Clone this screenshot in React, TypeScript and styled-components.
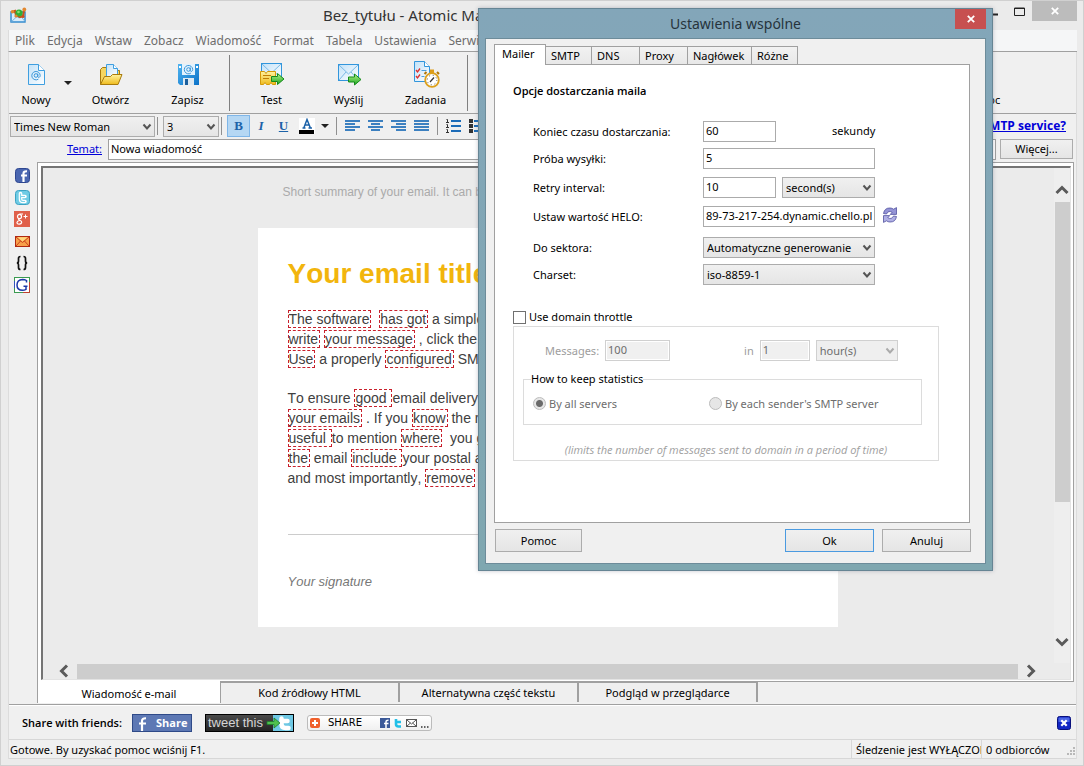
import React from "react";
import styled, { createGlobalStyle, css } from "styled-components";

const UI = `"Noto Sans", "Open Sans", sans-serif`;
const UI_BOLD = `"Open Sans", "Noto Sans", sans-serif`;
const LINE = "#a0a0a0";

const GlobalStyle = createGlobalStyle`
  * { box-sizing: border-box; }
  html, body { margin: 0; padding: 0; }
  body { font: 11px/16px ${UI}; color: #000; background: #ebebeb; }
  button, input, select { font: inherit; color: inherit; margin: 0; border-radius: 0; }
  button { background: none; border: 0; padding: 0; }
  svg { display: block; flex: none; }
`;

/* ---------- main window ---------- */

const Window = styled.div`
  position: relative;
  display: flex;
  flex-direction: column;
  height: 100vh;
  min-height: 700px;
  padding: 0 6px 6px 7px;
  overflow: hidden;
  background: #ebebeb;
  border: 1px solid #d0d0d0;
`;

const TitleBar = styled.header`
  display: flex;
  align-items: flex-start;
  height: 29px;
  padding: 0 0 0 2px;
`;

const AppIcon = styled.span`
  padding-top: 6px;
`;

const WindowTitle = styled.h1`
  flex: 1;
  margin: 0;
  padding: 4px 0 0 296px;
  font: 400 15px/20px ${UI};
  color: #333;
  white-space: nowrap;
`;

const WindowControls = styled.div`
  display: flex;
`;

const WindowButton = styled.button<{ $close?: boolean }>`
  display: grid;
  place-items: center;
  width: ${(p) => (p.$close ? 45 : 26)}px;
  height: 20px;
  background: ${(p) => (p.$close ? "#bcbcbc" : "transparent")};
`;

const MenuBar = styled.nav`
  display: flex;
  gap: 12px;
  height: 22px;
  padding: 1px 6px 0;
  background: #f5f6f7;
  border-left: 1px solid #dcdcdc;
  border-bottom: 1px solid ${LINE};
  overflow: hidden;
`;

const MenuItem = styled.button`
  font-size: 12px;
  line-height: 20px;
  color: #6d6d6d;
`;

const Client = styled.div`
  display: flex;
  flex: 1;
  flex-direction: column;
  min-height: 0;
  background: #f0f0f0;
  border-left: 1px solid #dcdcdc;
  border-right: 1px solid #dcdcdc;
`;

const Toolbar = styled.div`
  display: flex;
  height: 62px;
  padding-right: 55px;
  border-bottom: 1px solid ${LINE};
`;

const Tool = styled.button<{ $narrow?: boolean }>`
  display: flex;
  flex-direction: column;
  align-items: center;
  gap: 3px;
  width: ${(p) => (p.$narrow ? 54 : 77)}px;
  padding-top: 9px;
`;

const ToolArrow = styled.button`
  display: grid;
  place-items: center;
  width: 9px;
`;

const ToolRule = styled.span`
  width: 1px;
  height: 56px;
  margin: 3px;
  background: #808080;
`;

const Spacer = styled.span`
  flex: 1;
`;

const FormatBar = styled.div`
  display: flex;
  align-items: center;
  height: 24px;
  padding: 0 10px 0 1px;
`;

const Rule = styled.span<{ $gap?: number }>`
  width: 1px;
  height: 18px;
  margin: 0 ${(p) => p.$gap ?? 5}px 0 ${(p) => (p.$gap ? p.$gap : 2)}px;
  background: #909090;
`;

const FormatButton = styled.button<{ $on?: boolean; $width?: number }>`
  display: grid;
  place-items: center;
  width: ${(p) => p.$width ?? 23}px;
  height: 22px;
  font: 700 13px/16px "Liberation Serif", serif;
  color: #1c62a8;
  ${(p) =>
    p.$on &&
    css`
      background: #b5d7f3;
      border: 1px solid #7fb6e8;
    `}
`;

const ServiceLink = styled.a`
  font: 700 12px/16px ${UI_BOLD};
  color: #0000d8;
`;

const SubjectRow = styled.div`
  display: flex;
  align-items: center;
  height: 22px;
  padding-right: 3px;
  gap: 4px;
`;

const SubjectLabel = styled.label`
  width: 93px;
  text-align: right;
  color: #0000d8;
  text-decoration: underline;
  margin-right: 2px;
`;

const SubjectInput = styled.input`
  flex: 1;
  min-width: 0;
  height: 21px;
  padding: 0 2px 2px;
  background: #fff;
  border: 1px solid ${LINE};
`;

const Button = styled.button<{ $width: number; $primary?: boolean; $low?: boolean }>`
  width: ${(p) => p.$width}px;
  height: ${(p) => (p.$low ? 20 : 23)}px;
  background: linear-gradient(#f0f0f0, #e5e5e5);
  border: 1px solid ${(p) => (p.$primary ? "#4a9ae0" : "#acacac")};
`;

/* ---------- editor ---------- */

const Workspace = styled.div`
  display: flex;
  flex: 1;
  min-height: 0;
  padding: 2px 2px 0 0;
`;

const SideBar = styled.aside`
  display: flex;
  flex-direction: column;
  align-items: center;
  gap: 6px;
  width: 28px;
  padding: 5px 2px 0 0;
`;

const SideButton = styled.button`
  display: grid;
  place-items: center;
  width: 16px;
  height: 16px;
`;

const Frame = styled.div`
  display: flex;
  flex: 1;
  min-width: 0;
  padding: 3px 2px 1px 3px;
  background: #fff;
  border: 1px solid ${LINE};
`;

const Editor = styled.div`
  display: grid;
  flex: 1;
  grid-template: minmax(0, 1fr) 16px / minmax(0, 1fr) 16px;
  min-width: 0;
  border: 1px solid #e3e3e3;
  border-top: 2px solid #747474;
  border-left: 2px solid #747474;
  background: #ebebeb;
`;

const Canvas = styled.main`
  display: flex;
  flex-direction: column;
  align-items: center;
  overflow: hidden;
  padding: 14px 2px 0 0;
  font-family: "Liberation Sans", Arial, sans-serif;
  font-kerning: none;
`;

const Summary = styled.p`
  width: 530px;
  margin: 0 0 28px;
  font-size: 12px;
  line-height: 20px;
  height: 18px;
  color: #aaa;
  white-space: nowrap;
`;

const Sheet = styled.article`
  width: 580px;
  height: 399px;
  padding: 30px 30px 0;
  background: #fff;
`;

const MailTitle = styled.h2`
  margin: 0 0 20px;
  font-size: 28px;
  line-height: 31px;
  color: #f2b50d;
`;

const Paragraph = styled.p`
  margin: 0 0 19px;
  font-size: 14px;
  line-height: 20px;
  color: #404040;
  white-space: pre;
`;

const Misspelt = styled.span`
  padding-right: 1px;
  border: 1px dashed #c8202c;
`;

const SignatureRule = styled.hr`
  margin: 46px 0 38px;
  border: 0;
  border-top: 1px solid #ccc;
`;

const Signature = styled.p`
  margin: 0;
  font-size: 13px;
  line-height: 18px;
  font-style: italic;
  color: #777;
`;

const VScroll = styled.div`
  display: flex;
  flex-direction: column;
  align-items: center;
  gap: 7px;
  padding: 17px 0 16px;
  background: #eeeeee;
`;

const HScroll = styled.div`
  display: flex;
  grid-column: 1 / 3;
  align-items: center;
  gap: 8px;
  padding: 0 34px 0 16px;
`;

const VTrack = styled.span`
  display: flex;
  flex: 1;
  flex-direction: column;
`;

const VThumb = styled.span`
  width: 15px;
  height: 70%;
  background: #cdcdcd;
`;

const HThumb = styled.span`
  flex: 1;
  height: 15px;
  background: #cdcdcd;
`;

const ViewTabs = styled.div`
  display: flex;
  align-items: flex-end;
  height: 23px;
  padding: 0 0 1px 28px;
  border-bottom: 1px solid ${LINE};
`;

const ViewTab = styled.button<{ $active?: boolean }>`
  width: 179px;
  height: 20px;
  margin-bottom: 1px;
  background: #efefef;
  border-top: 1px solid ${LINE};
  border-right: 2px solid ${LINE};
  ${(p) =>
    p.$active &&
    css`
      width: 184px;
      height: 22px;
      margin-bottom: 0;
      padding-top: 3px;
      background: #fff;
      border: 1px solid ${LINE};
      border-top: 0;
      border-bottom: 0;
    `}
`;

const ShareBar = styled.div`
  display: flex;
  align-items: center;
  gap: 13px;
  height: 34px;
  padding: 1px 5px 0 13px;
  border-top: 1px solid #fff;
`;

const ShareLabel = styled.strong`
  width: 97px;
  font: 600 11px/16px ${UI_BOLD};
  white-space: nowrap;
`;

const FacebookButton = styled.button`
  display: flex;
  align-items: center;
  width: 60px;
  height: 18px;
  background: #5d78b4;
  border: 1px solid #2f4a88;
  color: #fff;
  font: 700 11px/16px ${UI_BOLD};
  gap: 8px;
  padding-left: 3px;
`;

const TweetButton = styled.button`
  display: flex;
  align-items: center;
  justify-content: space-between;
  width: 89px;
  height: 18px;
  padding-left: 2px;
  background: linear-gradient(#4a4a4a, #222);
  border: 1px solid #000;
  color: #d4d4d4;
  font: 400 13px/16px "Liberation Sans", sans-serif;
  white-space: nowrap;
`;

const AddThisButton = styled.button`
  display: flex;
  align-items: center;
  gap: 4px;
  width: 125px;
  height: 16px;
  padding: 0 2px;
  background: linear-gradient(#fff, #f0f0f0);
  border: 1px solid #bbb;
  border-radius: 3px;
  font: 400 10px/14px "DejaVu Sans", sans-serif;
`;

const AddThisText = styled.span`
  flex: 1;
  padding-left: 4px;
  text-align: left;
`;

const StatusBar = styled.footer`
  display: flex;
  height: 20px;
  border-top: 1px solid #d7d7d7;
  border-bottom: 1px solid #d7d7d7;
  line-height: 20px;
`;

const StatusPane = styled.span<{ $width?: number }>`
  ${(p) => (p.$width ? `width: ${p.$width}px; border-left: 1px solid #d7d7d7;` : "flex: 1;")}
  padding-left: ${(p) => (p.$width ? 4 : 1)}px;
  overflow: hidden;
  white-space: nowrap;
`;

/* ---------- form controls ---------- */

const SelectBox = styled.span<{ $width: number }>`
  position: relative;
  display: block;
  width: ${(p) => p.$width}px;
  height: 21px;
`;

const SelectControl = styled.select`
  appearance: none;
  display: block;
  width: 100%;
  height: 100%;
  padding: 0 18px 0 3px;
  line-height: 19px;
  background: linear-gradient(#f0f0f0, #e5e5e5);
  border: 1px solid #acacac;
  &:disabled { color: #6d6d6d; background: #efefef; border-color: #d0d0d0; opacity: 1; }
`;

const SelectArrow = styled.span<{ $dim?: boolean }>`
  position: absolute;
  top: 7px;
  right: 3px;
  color: ${(p) => (p.$dim ? "#ababab" : "#555")};
  pointer-events: none;
`;

function Select(props: { width: number; value: string; label: string; id?: string; disabled?: boolean }) {
  return (
    <SelectBox $width={props.width}>
      <SelectControl id={props.id} aria-label={props.label} disabled={props.disabled}>
        <option>{props.value}</option>
      </SelectControl>
      <SelectArrow $dim={props.disabled}>
        <svg width="10" height="8" viewBox="0 0 10 8">
          <path d="M1.5 1.5 5 5.5 8.5 1.5" fill="none" stroke="currentColor" strokeWidth="2" />
        </svg>
      </SelectArrow>
    </SelectBox>
  );
}

const TextInput = styled.input<{ $width: number }>`
  width: ${(p) => p.$width}px;
  height: 21px;
  padding: 0 2px 2px;
  background: #fff;
  border: 1px solid #ababab;
  &:disabled { color: #6d6d6d; background: #f0f0f0; border-color: #d0d0d0; box-shadow: inset 0 0 0 1px #fff; }
`;

/* ---------- settings dialog ---------- */

const Dialog = styled.section`
  position: absolute;
  top: 7px;
  left: 477px;
  display: flex;
  flex-direction: column;
  width: 515px;
  height: 563px;
  padding: 0 6px 6px;
  background: linear-gradient(#83a6b9, #7fa7b0);
  border: 1px solid #668594;
  box-shadow: 0 0 4px rgba(90, 90, 110, 0.35);
`;

const DialogHeader = styled.header`
  display: flex;
  height: 29px;
`;

const DialogTitle = styled.h2`
  flex: 1;
  margin: 0;
  padding: 5px 0 0 31px;
  text-align: center;
  font: 400 14px/20px ${UI};
  color: #26343c;
`;

const CloseButton = styled.button`
  display: grid;
  place-items: center;
  width: 31px;
  height: 20px;
  background: #c75050;
`;

const DialogBody = styled.div`
  display: flex;
  flex: 1;
  flex-direction: column;
  padding: 5px 14px 11px 8px;
  background: #f0f0f0;
  border: 1px solid #6d8c9a;
`;

const TabList = styled.div`
  display: flex;
  align-items: flex-end;
  height: 20px;
`;

const Tab = styled.button<{ $width: number; $active?: boolean }>`
  width: ${(p) => p.$width}px;
  height: 18px;
  padding-left: 5px;
  text-align: left;
  background: linear-gradient(#f2f2f2, #e8e8e8);
  border: 1px solid ${LINE};
  border-left: 0;
  border-bottom: 0;
  ${(p) =>
    p.$active &&
    css`
      z-index: 1;
      height: 21px;
      margin-bottom: -1px;
      padding: 0 0 2px 7px;
      background: #fff;
      border-left: 1px solid ${LINE};
    `}
`;

const Panel = styled.div`
  flex: 1;
  width: 476px;
  padding: 18px 30px 0 18px;
  background: #fff;
  border: 1px solid ${LINE};
`;

const SectionTitle = styled.h3`
  margin: 0 0 22px;
  font: 600 11px/16px ${UI_BOLD};
`;

const Fields = styled.div`
  display: grid;
  grid-template-columns: 170px 1fr;
  grid-template-rows: 27px 29px 29px 31px 27px 29px;
  padding-left: 20px;
`;

const FieldLabel = styled.label`
  line-height: 21px;
`;

const FieldRow = styled.div`
  display: flex;
  align-items: flex-start;
  gap: 6px;
`;

const Unit = styled.span`
  padding-left: 50px;
  line-height: 19px;
`;

const RefreshButton = styled.button`
  padding: 1px;
`;

const CheckLabel = styled.label`
  display: flex;
  align-items: center;
  gap: 3px;
  height: 16px;
  margin-top: 16px;
`;

const CheckBox = styled.input`
  appearance: none;
  width: 13px;
  height: 13px;
  background: #fff;
  border: 1px solid #707070;
`;

const Throttle = styled.div`
  width: 426px;
  height: 135px;
  margin-top: 1px;
  padding: 13px 16px 0 9px;
  border: 1px solid #dcdcdc;
`;

const LimitRow = styled.div`
  display: flex;
  align-items: center;
  gap: 6px;
  padding-left: 22px;
  color: #9d9d9d;
`;

const PeriodLabel = styled.label`
  padding-left: 68px;
`;

const Statistics = styled.fieldset`
  display: flex;
  align-items: center;
  height: 54px;
  margin: 10px 0 0;
  padding: 0 9px 4px;
  border: 1px solid #dcdcdc;
  color: #6d6d6d;
`;

const Legend = styled.legend`
  margin-left: -2px;
  padding: 0;
  color: #000;
`;

const RadioLabel = styled.label<{ $width?: number }>`
  display: flex;
  align-items: center;
  gap: 3px;
  width: ${(p) => (p.$width ? `${p.$width}px` : "auto")};
`;

const Radio = styled.input`
  appearance: none;
  width: 13px;
  height: 13px;
  background: #e6e6e6;
  border: 1px solid #bcbcbc;
  border-radius: 50%;
  &:checked { background: radial-gradient(circle, #6a6a6a 3px, #e6e6e6 4px); }
`;

const Note = styled.p`
  margin: 17px 0 0 7px;
  text-align: center;
  font: italic 400 11px/16px "Open Sans", "Noto Sans", sans-serif;
  color: #a0a0a0;
  white-space: nowrap;
`;

const DialogActions = styled.div`
  display: flex;
  gap: 8px;
  padding-top: 6px;
  width: 477px;
  padding-left: 1px;
`;

/* ---------- drawings ---------- */

const Caret = () => (
  <svg width="8" height="4" viewBox="0 0 8 4">
    <path d="M0 0h8L4 4z" fill="#222" />
  </svg>
);

const Chevron = ({ d, w, h }: { d: string; w: number; h: number }) => (
  <svg width={w} height={h} viewBox={`0 0 ${w} ${h}`}>
    <path d={d} fill="none" stroke="#5a5a5a" strokeWidth="3" />
  </svg>
);

const AppLogo = () => (
  <svg width="17" height="17" viewBox="0 0 17 17">
    <rect x="1" y="5" width="14" height="10" fill="#d9ecfa" stroke="#2a86cc" strokeWidth="1.4" />
    <path d="M1.5 14.5 7 9.500l2 1.500 2-1.500 4 5" fill="none" stroke="#7db8e4" />
    <path d="M2 5 5 4l1 4 4 2 3-1 1-6" fill="none" stroke="#c8511b" strokeWidth="2.200" />
    <circle cx="9" cy="6" r="3.600" fill="#2fae35" />
    <circle cx="8.500" cy="5" r="1.300" fill="#86e070" />
    <circle cx="2.500" cy="4.800" r="1.800" fill="#e2872e" />
    <circle cx="14.300" cy="2.500" r="1.900" fill="#e2872e" />
    <circle cx="6" cy="9" r="1.600" fill="#e2872e" />
    <circle cx="13" cy="9.500" r="1.600" fill="#c8511b" />
  </svg>
);

const At = ({ x, y }: { x: number; y: number }) => (
  <g transform={`translate(${x} ${y})`} fill="none" stroke="#3b97da">
    <circle r="1.800" />
    <path d="M1.800-2v3.200c.3 1.200 2.400.9 2.400-1.200A4.200 4.200 0 1 0 2.400 3.600" />
  </g>
);

const Defs = () => (
  <svg width="0" height="0" style={{ position: "absolute" }} aria-hidden="true">
    <defs>
      <linearGradient id="paper" x1="0" y1="0" x2="1" y2="1">
        <stop offset="0" stopColor="#c3e2f8" />
        <stop offset="1" stopColor="#fdfeff" />
      </linearGradient>
      <linearGradient id="gold" x1="0" y1="0" x2="0" y2="1">
        <stop offset="0" stopColor="#fff3a0" />
        <stop offset="1" stopColor="#efbb1c" />
      </linearGradient>
      <linearGradient id="go" x1="0" y1="0" x2="0" y2="1">
        <stop offset="0" stopColor="#b6f48c" />
        <stop offset="1" stopColor="#18a51c" />
      </linearGradient>
      <linearGradient id="disk" x1="0" y1="0" x2="1" y2="1">
        <stop offset="0" stopColor="#4fb4f0" />
        <stop offset="1" stopColor="#0b72c8" />
      </linearGradient>
    </defs>
  </svg>
);

const NewIcon = () => (
  <svg width="26" height="28" viewBox="0 0 26 28">
    <path d="M5.500 3.500h10l6 6v14h-16z" fill="url(#paper)" stroke="#3f9fe0" />
    <path d="M15.500 3.500v6h6" fill="#fff" stroke="#3f9fe0" />
    <At x={13} y={14.500} />
  </svg>
);

const OpenIcon = () => (
  <svg width="26" height="28" viewBox="0 0 26 28">
    <path d="M2.500 23.500v-15l2-2h5v3h12v6" fill="#f5d660" stroke="#a97b0c" />
    <path d="M8.500 3.500h7l4 4v8h-11z" fill="url(#paper)" stroke="#3f9fe0" />
    <path d="M15.500 3.500v4h4" fill="#fff" stroke="#3f9fe0" />
    <path d="M2.500 23.500l4-8h6l2-2h9.500l-4 10z" fill="url(#gold)" stroke="#a97b0c" />
  </svg>
);

const SaveIcon = () => (
  <svg width="26" height="28" viewBox="0 0 26 28">
    <path d="M3 3h21v21H5l-2-2z" fill="url(#disk)" />
    <rect x="7" y="3" width="13" height="11" fill="#e2f2fd" />
    <At x={13.500} y={8.500} />
    <rect x="8" y="17" width="11" height="7" fill="#dfeaf2" />
    <rect x="10" y="18" width="3" height="6" fill="#1b5f9c" />
    <rect x="4" y="5" width="2" height="2" fill="#fff" />
    <rect x="21" y="5" width="2" height="2" fill="#fff" />
  </svg>
);

const Envelope = ({ x, y }: { x: number; y: number }) => (
  <g transform={`translate(${x} ${y})`} stroke="#3296dc">
    <rect x=".5" y=".5" width="20" height="16" fill="url(#paper)" />
    <path d="M1 1l9.500 9L20 1M1 16l7-8M20 16l-7-8" fill="none" stroke="#79b9e6" />
  </g>
);

const GoArrow = ({ x, y }: { x: number; y: number }) => (
  <path transform={`translate(${x} ${y})`} d="M.5 3.500h6v-3l6.500 5.500-6.500 5.500v-3h-6z" fill="url(#go)" stroke="#158a1a" />
);

const TestIcon = () => (
  <svg width="28" height="28" viewBox="0 0 28 28">
    <Envelope x={3} y={2} />
    <path d="M2.500 10.500h4l1.500 2 1.500-2h8v13h-3l-1.500-2-1.500 2h-3l-1.500-2-1.500 2h-3z" fill="url(#gold)" stroke="#d59a06" />
    <path d="M5 14.500h8M5 17.500h6" stroke="#c07f05" />
    <GoArrow x={13} y={12} />
  </svg>
);

const SendIcon = () => (
  <svg width="28" height="28" viewBox="0 0 28 28">
    <Envelope x={3} y={3} />
    <GoArrow x={13} y={12.500} />
  </svg>
);

const TasksIcon = () => (
  <svg width="28" height="28" viewBox="0 0 28 28">
    <path d="M2.500.500h10l5 5v15h-15z" fill="url(#paper)" stroke="#3296dc" />
    <path d="M12.500.500v5h5" fill="#fff" stroke="#3296dc" />
    <path d="M4 9l1.500 2L8 7.500M4 15l1.500 2L8 13.500" fill="none" stroke="#dc3030" strokeWidth="1.300" />
    <path d="M9.500 9.500h5M9.500 15.500h3" stroke="#4c9fdc" />
    <rect x="18" y="8.500" width="4" height="4" fill="#dd9c18" />
    <path d="M25 11l2 2M14.500 11l-2 2" stroke="#b27708" strokeWidth="2" />
    <circle cx="20" cy="19" r="6.800" fill="#fff" stroke="#dca01c" strokeWidth="1.800" />
    <circle cx="20" cy="19" r="4.800" fill="none" stroke="#555" strokeDasharray="1 2.800" />
    <path d="M18 21l4-4.500" stroke="#333" strokeWidth="1.200" />
  </svg>
);

const ALIGN: Record<string, number[][]> = {
  left: [[0, 15], [0, 10], [0, 15], [0, 10]],
  center: [[0, 15], [3, 12], [0, 15], [3, 12]],
  right: [[0, 15], [5, 15], [0, 15], [5, 15]],
  justify: [[0, 15], [0, 15], [0, 15], [0, 15]],
};

const AlignIcon = ({ kind }: { kind: string }) => (
  <svg width="15" height="12" viewBox="0 0 15 12">
    {ALIGN[kind].map(([a, b], i) => (
      <path key={i} d={`M${a} ${i * 3 + 1}H${b}`} stroke="#1c6cb8" strokeWidth="1.700" />
    ))}
  </svg>
);

const ListIcon = ({ bullets }: { bullets?: boolean }) => (
  <svg width="15" height="14" viewBox="0 0 15 14">
    {[1, 6, 11].map((y) => (
      <g key={y}>
        <path d={`M5 ${y + 1}h10`} stroke="#1c6cb8" strokeWidth="2" />
        {bullets ? (
          <rect x="0" y={y - 1} width="4" height="4" fill="#333" />
        ) : (
          <path d={`M.5 ${y - 0.500}h1v3M0 ${y + 2.500}h3`} fill="none" stroke="#333" />
        )}
      </g>
    ))}
  </svg>
);

const TextColorIcon = () => (
  <svg width="16" height="16" viewBox="0 0 16 16">
    <rect width="16" height="16" fill="#fff" />
    <path d="M3.500 10h3M9.500 10h3.500M5 9.500 8 1.500l3.200 8M6 7h4" fill="none" stroke="#1c62a8" strokeWidth="1.500" />
    <rect y="12" width="15" height="4" fill="#000" />
  </svg>
);

const FacebookGlyph = () => (
  <svg width="15" height="15" viewBox="0 0 15 15">
    <rect x=".5" y=".5" width="14" height="14" rx="3" fill="#4a66b0" stroke="#2f4790" />
    <path d="M8.500 14V5.500q0-2.500 3.500-2.200M6 7.500h6" fill="none" stroke="#fff" strokeWidth="2.200" />
  </svg>
);

const TwitterGlyph = () => (
  <svg width="15" height="15" viewBox="0 0 15 15">
    <rect x=".5" y=".5" width="14" height="14" rx="3" fill="#6fcbe4" stroke="#3aa3c4" />
    <path d="M5.500 3.500v5.500q0 2.500 2.500 2.500h2M5.500 6.500h4.500" fill="none" stroke="#fff" strokeWidth="3.600" strokeLinecap="round" />
    <path d="M5.500 3.500v5.500q0 2.500 2.500 2.500h2M5.500 6.500h4.500" fill="none" stroke="#7fd3ea" strokeWidth="1.200" />
  </svg>
);

const GooglePlusGlyph = () => (
  <svg width="16" height="16" viewBox="0 0 16 16">
    <rect width="16" height="16" fill="#e0604a" />
    <g fill="none" stroke="#fff" strokeWidth="1.200">
      <ellipse cx="5.500" cy="5.500" rx="2" ry="2.200" />
      <path d="M9 3H5.500M5 7.700q-1 1 .8 1.600 2.200.8 1.900 2.200-.4 1.700-2.600 1.600-2.300-.1-2.100-1.800.3-1.500 2.800-1.800" />
      <path d="M9.500 5.500h4M11.500 3.500v4" strokeWidth="1" />
    </g>
  </svg>
);

const MailGlyph = () => (
  <svg width="15" height="11" viewBox="0 0 15 11">
    <rect x=".5" y=".5" width="14" height="10" fill="#f8a04a" stroke="#b02810" />
    <path d="M1 1l6.500 5.500L14 1M1 10l4.500-5M14 10 9.500 5" fill="none" stroke="#c8401c" />
    <path d="M2.500 1.200h10L7.500 5.400z" fill="#ffd77a" />
  </svg>
);

const BracesGlyph = () => (
  <svg width="14" height="16" viewBox="0 0 14 16">
    <path d="M5.500 1.500q-2 0-2 2v2.500q0 2-1.700 2 1.700 0 1.700 2v2.500q0 2 2 2M8.500 1.500q2 0 2 2v2.500q0 2 1.700 2-1.700 0-1.700 2v2.500q0 2-2 2" fill="none" stroke="#111" strokeWidth="1.700" />
  </svg>
);

const GoogleGlyph = () => (
  <svg width="16" height="16" viewBox="0 0 16 16">
    <rect x=".5" y=".5" width="15" height="15" fill="#fff" stroke="#3a9a50" />
    <path d="M15.500 5v10.500H9" fill="none" stroke="#c04030" />
    <path d="M.5 4v7" fill="none" stroke="#3050c0" />
    <path d="M12.500 5.500V3.500Q11 2.500 8.500 2.500 3 2.800 3 8t5.500 5.300q2 0 3.500-1V9.500M9.500 9.300h4" fill="none" stroke="#1c38a8" strokeWidth="1.500" />
  </svg>
);

const TweetBird = () => (
  <svg width="27" height="16" viewBox="0 0 27 16">
    <rect x="7" width="20" height="16" fill="#6ec8e4" />
    <path d="M15.500 3.500v5.500q0 4 4 4h3M15.500 6h6" fill="none" stroke="#fff" strokeWidth="4.500" strokeLinecap="round" strokeLinejoin="round" />
    <path d="M1 6.500h7V3l6 5-6 5V9.500H1z" fill="#4fc04f" stroke="#1d7d2a" strokeWidth=".8" />
  </svg>
);

const PlusGlyph = () => (
  <svg width="10" height="10" viewBox="0 0 10 10">
    <rect width="10" height="10" rx="2" fill="#f0602c" />
    <path d="M5 2v6M2 5h6" stroke="#fff" strokeWidth="2" />
  </svg>
);

const MiniShareGlyphs = () => (
  <svg width="49" height="12" viewBox="0 0 49 12">
    <rect y="1" width="10" height="10" fill="#3b5998" />
    <path d="M6 11V5q0-2 2.500-1.800M4 6.500h4.500" fill="none" stroke="#fff" strokeWidth="1.500" />
    <path d="M16 2v5q0 2.500 2.500 2.500H21M16 5h5" fill="none" stroke="#22c0e8" strokeWidth="2.600" />
    <rect x="26.500" y="2.500" width="10" height="7" fill="#fff" stroke="#555" />
    <path d="M27 3l4.500 4L36 3M27 9l3.500-3M36 9l-3.500-3" fill="none" stroke="#555" />
    <path d="M41 10h1.500M44 10h1.500M47 10h1.500" stroke="#333" strokeWidth="1.500" />
  </svg>
);

const Cross = ({ size }: { size: number }) => (
  <svg width={size} height={size} viewBox="0 0 8 8">
    <path d="M.8.8l6.400 6.400M7.200.8.8 7.200" stroke="#fff" strokeWidth="1.800" />
  </svg>
);

const CloseBadge = () => (
  <svg width="14" height="14" viewBox="0 0 14 14">
    <rect x=".5" y=".5" width="13" height="13" rx="2" fill="#1226c4" stroke="#08107c" />
    <path d="M1.500 2.500q0-1 1-1h9q1 0 1 1V6h-11z" fill="#4a64e4" />
    <path d="M4.300 4.300l5.400 5.400M9.700 4.300 4.300 9.700" stroke="#fff" strokeWidth="2.200" />
  </svg>
);

const RefreshGlyph = () => (
  <svg width="16" height="16" viewBox="0 0 16 16">
    <g stroke="#5252a0" strokeWidth=".8">
      <path d="M1.500 6.500Q2.500.8 8 1q2 0 3.500 1.200L14.500.6V7.400H8.200l2-2Q6.500 3 4.500 7z" fill="#9494d6" />
      <path d="M14.500 9.500Q13.500 15.200 8 15q-2 0-3.500-1.200L1.500 15.400V8.600H7.800l-2 2Q9.500 13 11.500 9z" fill="#b0b0e4" />
    </g>
  </svg>
);

const Grip = () => (
  <svg width="10" height="16" viewBox="0 0 10 16">
    <path d="M7 7h2v2H7zM4 10h2v2H4zM7 10h2v2H7zM1 13h2v2H1zM4 13h2v2H4zM7 13h2v2H7z" fill="#b8b8b8" />
  </svg>
);

/* ---------- composition ---------- */

const MENUS = ["Plik", "Edycja", "Wstaw", "Zobacz", "Wiadomość", "Format", "Tabela", "Ustawienia", "Serwis"];

function SettingsDialog() {
  return (
    <Dialog role="dialog" aria-labelledby="dialog-title">
      <DialogHeader>
        <DialogTitle id="dialog-title">Ustawienia wspólne</DialogTitle>
        <CloseButton aria-label="Zamknij"><Cross size={8} /></CloseButton>
      </DialogHeader>
      <DialogBody>
        <TabList role="tablist">
          <Tab role="tab" $width={52} $active>Mailer</Tab>
          <Tab role="tab" $width={46}>SMTP</Tab>
          <Tab role="tab" $width={48}>DNS</Tab>
          <Tab role="tab" $width={48}>Proxy</Tab>
          <Tab role="tab" $width={64}>Nagłówek</Tab>
          <Tab role="tab" $width={46}>Różne</Tab>
        </TabList>
        <Panel>
          <SectionTitle>Opcje dostarczania maila</SectionTitle>
          <Fields>
            <FieldLabel htmlFor="timeout">Koniec czasu dostarczania:</FieldLabel>
            <FieldRow>
              <TextInput id="timeout" $width={73} defaultValue="60" />
              <Unit>sekundy</Unit>
            </FieldRow>
            <FieldLabel htmlFor="attempts">Próba wysyłki:</FieldLabel>
            <FieldRow><TextInput id="attempts" $width={172} defaultValue="5" /></FieldRow>
            <FieldLabel htmlFor="retry">Retry interval:</FieldLabel>
            <FieldRow>
              <TextInput id="retry" $width={73} defaultValue="10" />
              <Select width={93} value="second(s)" label="Retry unit" />
            </FieldRow>
            <FieldLabel htmlFor="helo">Ustaw wartość HELO:</FieldLabel>
            <FieldRow>
              <TextInput id="helo" $width={172} defaultValue="89-73-217-254.dynamic.chello.pl" />
              <RefreshButton aria-label="Odśwież"><RefreshGlyph /></RefreshButton>
            </FieldRow>
            <FieldLabel htmlFor="sector">Do sektora:</FieldLabel>
            <Select id="sector" width={172} value="Automatyczne generowanie" label="Do sektora" />
            <FieldLabel htmlFor="charset">Charset:</FieldLabel>
            <Select id="charset" width={172} value="iso-8859-1" label="Charset" />
          </Fields>
          <CheckLabel>
            <CheckBox type="checkbox" />
            Use domain throttle
          </CheckLabel>
          <Throttle>
            <LimitRow>
              <label htmlFor="messages">Messages:</label>
              <TextInput id="messages" $width={65} defaultValue="100" disabled />
              <PeriodLabel htmlFor="period">in</PeriodLabel>
              <TextInput id="period" $width={50} defaultValue="1" disabled />
              <Select width={82} value="hour(s)" label="Period unit" disabled />
            </LimitRow>
            <Statistics>
              <Legend>How to keep statistics</Legend>
              <RadioLabel $width={176}>
                <Radio type="radio" name="stats" defaultChecked disabled />
                By all servers
              </RadioLabel>
              <RadioLabel>
                <Radio type="radio" name="stats" disabled />
                By each sender's SMTP server
              </RadioLabel>
            </Statistics>
            <Note>(limits the number of messages sent to domain in a period of time)</Note>
          </Throttle>
        </Panel>
        <DialogActions>
          <Button $width={87}>Pomoc</Button>
          <Spacer />
          <Button $width={89} $primary>Ok</Button>
          <Button $width={89}>Anuluj</Button>
        </DialogActions>
      </DialogBody>
    </Dialog>
  );
}

export default function App() {
  return (
    <>
      <GlobalStyle />
      <Window>
        <Defs />
        <TitleBar>
          <AppIcon><AppLogo /></AppIcon>
          <WindowTitle>Bez_tytułu - Atomic Mail</WindowTitle>
          <WindowControls>
            <WindowButton aria-label="Minimalizuj">
              <svg width="10" height="10" viewBox="0 0 10 10"><path d="M0 8.500h10" stroke="#222" strokeWidth="2" /></svg>
            </WindowButton>
            <WindowButton aria-label="Maksymalizuj">
              <svg width="11" height="9" viewBox="0 0 11 9"><path d="M.5 1h10v7.500H.5zM0 1.500h11" fill="none" stroke="#222" /></svg>
            </WindowButton>
            <WindowButton $close aria-label="Zamknij"><Cross size={8} /></WindowButton>
          </WindowControls>
        </TitleBar>
        <MenuBar>
          {MENUS.map((m) => <MenuItem key={m}>{m}</MenuItem>)}
        </MenuBar>
        <Client>
          <Toolbar>
            <Tool $narrow><NewIcon />Nowy</Tool>
            <ToolArrow aria-label="Nowy - opcje"><Caret /></ToolArrow>
            <Tool><OpenIcon />Otwórz</Tool>
            <Tool><SaveIcon />Zapisz</Tool>
            <ToolRule />
            <Tool><TestIcon />Test</Tool>
            <Tool><SendIcon />Wyślij</Tool>
            <Tool><TasksIcon />Zadania</Tool>
            <ToolRule />
            <Spacer />
            <Tool><svg width="28" height="28" />Pomoc</Tool>
          </Toolbar>
          <FormatBar>
            <Select width={145} value="Times New Roman" label="Czcionka" />
            <Rule />
            <Select width={56} value="3" label="Rozmiar" />
            <Rule />
            <FormatButton $on>B</FormatButton>
            <FormatButton $width={22}><i>I</i></FormatButton>
            <FormatButton><u>U</u></FormatButton>
            <FormatButton aria-label="Kolor"><TextColorIcon /></FormatButton>
            <FormatButton $width={14} aria-label="Kolor - opcje"><Caret /></FormatButton>
            <Rule $gap={4} />
            {Object.keys(ALIGN).map((k) => (
              <FormatButton key={k} aria-label={k}><AlignIcon kind={k} /></FormatButton>
            ))}
            <Rule $gap={4} />
            <FormatButton aria-label="Numeracja"><ListIcon /></FormatButton>
            <FormatButton aria-label="Punktory"><ListIcon bullets /></FormatButton>
            <Spacer />
            <ServiceLink href="#smtp">SMTP service?</ServiceLink>
          </FormatBar>
          <SubjectRow>
            <SubjectLabel htmlFor="subject">Temat:</SubjectLabel>
            <SubjectInput id="subject" defaultValue="Nowa wiadomość" />
            <Button $width={73} $low>Więcej...</Button>
          </SubjectRow>
          <Workspace>
            <SideBar>
              <SideButton aria-label="Facebook"><FacebookGlyph /></SideButton>
              <SideButton aria-label="Twitter"><TwitterGlyph /></SideButton>
              <SideButton aria-label="Google+"><GooglePlusGlyph /></SideButton>
              <SideButton aria-label="E-mail"><MailGlyph /></SideButton>
              <SideButton aria-label="Kod"><BracesGlyph /></SideButton>
              <SideButton aria-label="Google"><GoogleGlyph /></SideButton>
            </SideBar>
            <Frame>
              <Editor>
                <Canvas>
                  <Summary>Short summary of your email. It can be</Summary>
                  <Sheet>
                    <MailTitle>Your email title</MailTitle>
                    <Paragraph>
                      <Misspelt>The software</Misspelt>{"  "}<Misspelt>has got</Misspelt>{" a simple\n"}
                      <Misspelt>write</Misspelt>{" "}<Misspelt>your message</Misspelt>{" , click the\n"}
                      <Misspelt>Use</Misspelt>{" a properly "}<Misspelt>configured</Misspelt>{" SMTP"}
                    </Paragraph>
                    <Paragraph>
                      {"To ensure "}<Misspelt>{"good "}</Misspelt>{"email delivery\n"}
                      <Misspelt>your emails</Misspelt>{" . If you "}<Misspelt>know</Misspelt>{" the re\n"}
                      <Misspelt>{"useful "}</Misspelt>{"to mention "}<Misspelt>where</Misspelt>{"  you g\n"}
                      <Misspelt>the</Misspelt>{" email "}<Misspelt>{"include "}</Misspelt>{"your postal ad\n"}
                      {"and most importantly, "}<Misspelt>remove</Misspelt>
                    </Paragraph>
                    <SignatureRule />
                    <Signature>Your signature</Signature>
                  </Sheet>
                </Canvas>
                <VScroll>
                  <Chevron d="M1.500 8 7 2.500 12.500 8" w={14} h={10} />
                  <VTrack><VThumb /></VTrack>
                  <Chevron d="M1.500 2 7 7.500 12.500 2" w={14} h={10} />
                </VScroll>
                <HScroll>
                  <Chevron d="M8 1.500 2.500 7 8 12.500" w={10} h={14} />
                  <HThumb />
                  <Chevron d="M2 1.500 7.500 7 2 12.500" w={10} h={14} />
                </HScroll>
              </Editor>
            </Frame>
          </Workspace>
          <ViewTabs role="tablist">
            <ViewTab role="tab" $active>Wiadomość e-mail</ViewTab>
            <ViewTab role="tab">Kod źródłowy HTML</ViewTab>
            <ViewTab role="tab">Alternatywna część tekstu</ViewTab>
            <ViewTab role="tab">Podgląd w przeglądarce</ViewTab>
          </ViewTabs>
          <ShareBar>
            <ShareLabel>Share with friends:</ShareLabel>
            <FacebookButton>
              <svg width="12" height="16" viewBox="0 0 12 16"><path d="M6 16V6q0-3 4-2.700M3 8.500h7" fill="none" stroke="#fff" strokeWidth="2.200" /></svg>
              Share
            </FacebookButton>
            <TweetButton>tweet this<TweetBird /></TweetButton>
            <AddThisButton>
              <PlusGlyph />
              <AddThisText>SHARE</AddThisText>
              <MiniShareGlyphs />
            </AddThisButton>
            <Spacer />
            <button aria-label="Zamknij pasek"><CloseBadge /></button>
          </ShareBar>
          <StatusBar>
            <StatusPane>Gotowe. By uzyskać pomoc wciśnij F1.</StatusPane>
            <StatusPane $width={130}>Śledzenie jest WYŁĄCZONE</StatusPane>
            <StatusPane $width={85}>0 odbiorców</StatusPane>
            <Grip />
          </StatusBar>
        </Client>
        <SettingsDialog />
      </Window>
    </>
  );
}
